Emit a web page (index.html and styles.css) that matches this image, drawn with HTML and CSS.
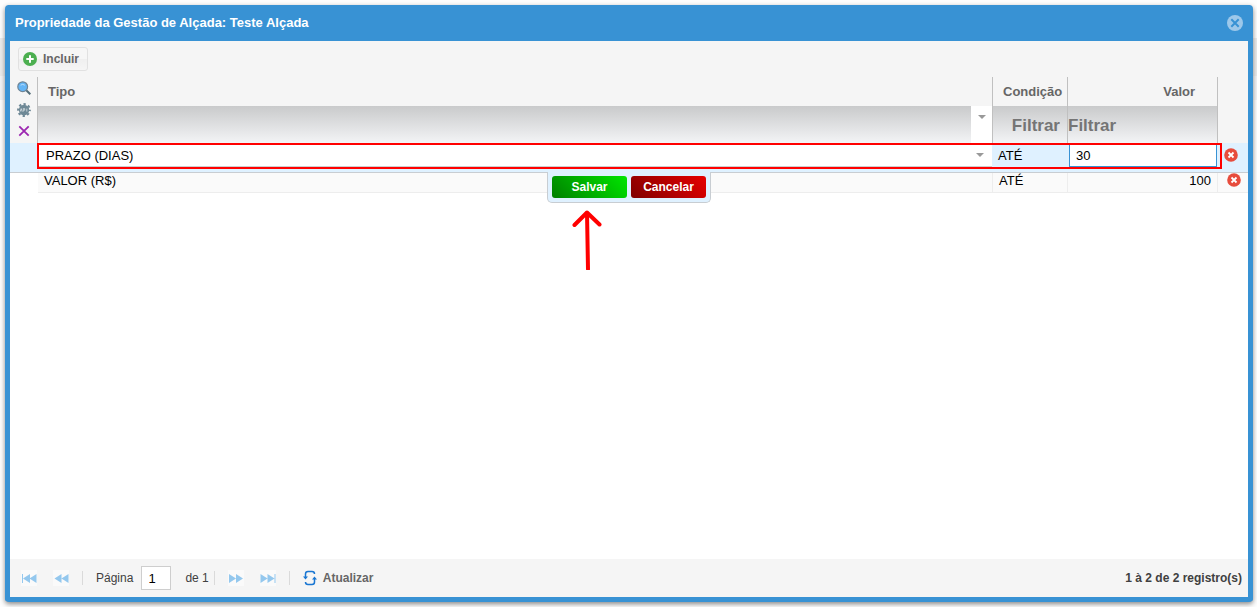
FILE: index.html
```html
<!DOCTYPE html>
<html lang="pt-BR">
<head>
<meta charset="utf-8">
<title>Propriedade da Gestão de Alçada</title>
<link rel="stylesheet" href="styles.css">
</head>
<body>
<section class="window">
  <header class="titlebar">
    <h1 class="title">Propriedade da Gestão de Alçada: Teste Alçada</h1>
    <button class="icon-btn" type="button" aria-label="Fechar">
      <svg width="16" height="16" viewBox="0 0 16 16"><circle cx="8" cy="8" r="8" fill="#9dc8ea"/><path d="M4.3 4.3l7.4 7.4M11.7 4.3l-7.4 7.4" stroke="#3892d4" stroke-width="2"/></svg>
    </button>
  </header>
  <div class="toolbar">
    <button class="add-btn" type="button">
      <svg width="14" height="14" viewBox="0 0 14 14"><circle cx="7" cy="7" r="7" fill="#4caf50"/><path d="M7 3.3v7.4M3.3 7h7.4" stroke="#fff" stroke-width="2"/></svg>
      Incluir
    </button>
  </div>
  <main class="content">
    <table class="grid">
      <colgroup><col class="c-rail"><col><col class="c-cond"><col class="c-valor"><col class="c-del"></colgroup>
      <thead>
        <tr class="head">
          <th class="rail" rowspan="2">
            <div class="rail-tools">
              <button class="icon-btn" type="button" aria-label="Pesquisar">
                <svg width="14" height="14" viewBox="0 0 14 14"><path d="M9 9l4.300 4.300" stroke="#546e7a" stroke-width="2"/><circle cx="5.700" cy="5.700" r="4.900" fill="#64b5f6" stroke="#6f8596" stroke-width="1.200"/><path d="M3.600 4.200q2-1.600 4.200 0" stroke="#bbdefb" fill="none"/></svg>
              </button>
              <button class="icon-btn" type="button" aria-label="Configurar">
                <svg width="14" height="14" viewBox="0 0 14 14"><circle cx="7" cy="7" r="5.900" fill="none" stroke="#6f8996" stroke-width="2" stroke-dasharray="2.320 2.310" stroke-dashoffset="1.160"/><circle cx="7" cy="7" r="5.200" fill="#6f8996"/><path d="M3.200 8.600l1-3 1 3M6.300 8.600v-3h1.400v1.600H6.500M9.800 5.600v3" stroke="#cfd8dc" stroke-width=".9" fill="none"/></svg>
              </button>
              <button class="icon-btn" type="button" aria-label="Limpar">
                <svg width="14" height="14" viewBox="0 0 14 14"><path d="M2.300 1.300l9.400 9.400M11.700 1.300l-9.400 9.400" stroke="#9c27b0" stroke-width="1.800"/></svg>
              </button>
            </div>
          </th>
          <th class="label">Tipo</th>
          <th class="label">Condição</th>
          <th class="label right">Valor</th>
          <th class="blank" rowspan="2"></th>
        </tr>
        <tr class="filters">
          <td><div class="filter-combo"><button class="filter-arrow" type="button" aria-label="Filtrar tipo"><svg width="8" height="4" viewBox="0 0 8 4"><path d="M0 0h8L4 4z" fill="#999"/></svg></button></div></td>
          <td><input class="filter right" type="text" placeholder="Filtrar" aria-label="Filtrar condição"></td>
          <td><input class="filter" type="text" placeholder="Filtrar" aria-label="Filtrar valor"></td>
        </tr>
      </thead>
      <tbody>
        <tr class="editing">
          <td><span class="frame"></span>
            <div class="editor">
              <button class="save" type="button">Salvar</button>
              <button class="cancel" type="button">Cancelar</button>
              <svg class="arrow" width="32" height="60" viewBox="0 0 32 60"><path d="M17 59L16 2.500M16 2.500L3.500 15M16 2.500L28.500 14.500" fill="none" stroke="#f00" stroke-width="4" stroke-linecap="round"/></svg>
            </div>
          </td>
          <td>
            <div class="combo">
              <select class="combo-select" aria-label="Tipo"><option>PRAZO (DIAS)</option><option>VALOR (R$)</option></select>
              <svg width="8" height="4" viewBox="0 0 8 4"><path d="M0 0h8L4 4z" fill="#999"/></svg>
            </div>
          </td>
          <td><span class="cell">ATÉ</span></td>
          <td><input class="value" type="text" value="30" aria-label="Valor"></td>
          <td><button class="icon-btn delete" type="button" aria-label="Excluir"><svg width="14" height="14" viewBox="0 0 14 14"><circle cx="7" cy="7" r="6.800" fill="#e74c3c"/><path d="M4.500 4.500l5 5M9.500 4.500l-5 5" stroke="#fff" stroke-width="1.800"/></svg></button></td>
        </tr>
        <tr class="row">
          <td></td>
          <td><span class="cell">VALOR (R$)</span></td>
          <td><span class="cell">ATÉ</span></td>
          <td class="right"><span class="cell">100</span></td>
          <td class="center"><button class="icon-btn" type="button" aria-label="Excluir"><svg width="14" height="14" viewBox="0 0 14 14"><circle cx="7" cy="7" r="6.800" fill="#e74c3c"/><path d="M4.500 4.500l5 5M9.500 4.500l-5 5" stroke="#fff" stroke-width="1.800"/></svg></button></td>
        </tr>
      </tbody>
    </table>
  </main>
  <footer class="pager">
    <button class="page-btn" type="button" aria-label="Primeira página"><svg width="16" height="16" viewBox="0 0 16 16"><path d="M1 4h1v9H1zM9 4v9L2 8.500zM15.500 4v9l-7-4.500z" fill="#94c8ee"/></svg></button>
    <button class="page-btn" type="button" aria-label="Página anterior"><svg width="16" height="16" viewBox="0 0 16 16"><path d="M8.500 4v9l-7-4.500zM15.500 4v9l-7-4.500z" fill="#94c8ee"/></svg></button>
    <span class="sep"></span>
    <label class="page-label" for="page">Página</label>
    <input class="page-input" id="page" type="text" value="1">
    <span class="page-total">de 1</span>
    <span class="sep tight"></span>
    <button class="page-btn" type="button" aria-label="Próxima página"><svg width="16" height="16" viewBox="0 0 16 16"><path d="M1 4v9l7-4.500zM8 4v9l7-4.500z" fill="#94c8ee"/></svg></button>
    <button class="page-btn" type="button" aria-label="Última página"><svg width="16" height="16" viewBox="0 0 16 16"><path d="M.5 4v9l7-4.500zM7.500 4v9l7-4.500zM14.500 4h1v9h-1z" fill="#94c8ee"/></svg></button>
    <span class="sep"></span>
    <button class="refresh" type="button">
      <svg width="14" height="16" viewBox="0 0 14 16"><path d="M2.500 7.500V4Q2.500 1.500 5 1.500h4Q11.500 1.500 11.500 4M11.500 8.500V12q0 2.500-2.500 2.500H5Q2.500 14.500 2.500 12" fill="none" stroke="#1976d2" stroke-width="1.500"/><path d="M0 6.500h5L2.500 9.500zM9 9.500h5l-2.500-3z" fill="#1976d2"/></svg>
      Atualizar
    </button>
    <strong class="count">1 à 2 de 2 registro(s)</strong>
  </footer>
</section>
</body>
</html>
```
FILE: styles.css
```css
* { box-sizing: border-box; }

body {
  margin: 0;
  height: 100vh;
  padding: 5px 4px 5px 5px;
  display: flex;
  background: linear-gradient(#fdfdfd 38px, #ebebeb 38px, #ebebeb 76px, #f3f4f6 76px, #f3f4f6 100px, #fdfdfd 100px);
  font: 13px/16px "Liberation Sans", Arial, sans-serif;
  color: #000;
}

button, input, select { font: inherit; color: inherit; margin: 0; }
button { padding: 0; border: 0; background: none; cursor: pointer; }
svg { display: block; }

.window {
  flex: 1;
  min-width: 0;
  display: flex;
  flex-direction: column;
  border: 5px solid #3892d4;
  border-top-width: 0;
  border-radius: 4px;
  background: #3892d4;
  box-shadow: 0 2px 5px #888;
}

.titlebar {
  display: flex;
  align-items: center;
  justify-content: space-between;
  height: 36px;
  padding: 0 5px;
  color: #fff;
}
.title { margin: 0; font-size: 13px; line-height: 16px; }

.toolbar {
  height: 36px;
  padding: 6px 8px;
  background: #f5f5f5;
}
.add-btn {
  display: flex;
  align-items: center;
  gap: 6px;
  height: 24px;
  padding: 0 8px 0 4px;
  border: 1px solid #e1e1e1;
  border-radius: 3px;
  background: linear-gradient(#f6f6f6 50%, #efefef 50%, #f5f5f5);
  font-size: 12px;
  font-weight: bold;
  color: #666;
}

.content { flex: 1; background: #fff; }

.grid { width: 100%; table-layout: fixed; border-collapse: separate; border-spacing: 0; }
.grid th, .grid td { padding: 0; }
.c-rail { width: 28px; }
.c-cond { width: 75px; }
.c-valor { width: 150px; }
.c-del { width: 30px; }
.right { text-align: right; }
.center { text-align: center; }

.rail, .label, .blank { background: #f5f5f5; font-weight: bold; color: #666; }
.rail, .label, .filters td { border-right: 1px solid #c0c0c0; }
.rail { vertical-align: top; }
.rail-tools { display: flex; flex-direction: column; align-items: center; gap: 8px; padding-top: 4px; }
.head .label { height: 29px; padding-left: 10px; text-align: left; white-space: nowrap; }
.head .right { padding-right: 22px; text-align: right; }

.filters td { height: 37px; background: linear-gradient(#c9cacb, #f3f4f6); }
.filter-combo { display: flex; justify-content: flex-end; height: 37px; }
.filter-arrow { display: flex; justify-content: center; width: 21px; padding-top: 9px; background: #fff; }
.filter {
  display: block;
  width: 100%;
  height: 37px;
  padding: 2px 0 0;
  border: 0;
  outline: 0;
  background: none;
  font-size: 17px;
  font-weight: bold;
}
.filter.right { padding-right: 7px; }
.filter::placeholder { color: #757575; opacity: 1; }

.editing { position: relative; }
.editing td { height: 30px; vertical-align: top; background: #dff1ff; border-bottom: 1px solid #c8cdd2; }
.editing .cell { display: block; padding: 5px; }
.frame {
  position: absolute;
  z-index: 1;
  top: 0;
  left: 27px;
  right: 26px;
  height: 26px;
  border: 2px solid #f00;
  pointer-events: none;
}
.combo { display: flex; align-items: center; height: 24px; padding-right: 8px; margin-right: 1px; border-bottom: 1px solid #cecece; background: #fff; }
.combo-select { flex: 1; min-width: 0; height: 23px; padding: 2px 0 0 8px; border: 0; background: none; appearance: none; }
.value {
  display: block;
  width: 148px;
  height: 24px;
  margin-left: 1px;
  padding: 0 6px;
  border: 1px solid #3892d4;
  outline: 0;
  background: #fff;
}
.icon-btn { display: inline-block; vertical-align: top; }
.delete { margin: 5px 0 0 6px; }

.editor {
  position: absolute;
  z-index: 2;
  top: 29px;
  left: 50%;
  transform: translateX(-50%);
  display: flex;
  gap: 4px;
  padding: 4px;
  border: 1px solid #c8cdd2;
  border-top: 0;
  border-radius: 0 0 5px 5px;
  background: #dff1ff;
}
.save, .cancel {
  width: 75px;
  height: 22px;
  border-radius: 3px;
  font-size: 12px;
  font-weight: bold;
  color: #fff;
}
.save { background: linear-gradient(45deg, #008000, #00e600); }
.cancel { background: linear-gradient(45deg, #800000, #e60000); }
.arrow { position: absolute; top: 38px; left: 23px; }

.row td { height: 20px; vertical-align: top; }
.row td + td { background: #fafafa; border-right: 1px solid #ededed; border-bottom: 1px solid #ededed; }
.row td:last-child { border-right: 0; }
.row .cell { display: block; padding: 0 6px; }
.row .center { padding-left: 2px; }

.pager {
  display: flex;
  align-items: center;
  height: 38px;
  padding: 0 6px 0 11px;
  background: #f5f5f5;
  font-size: 12px;
  color: #404040;
}
.page-btn { width: 16px; background: #fafafa; }
.page-btn + .page-btn { margin-left: 16px; }
.sep { width: 1px; height: 14px; margin: 0 13px; background: #dadada; }
.sep.tight { margin-left: 5px; }
.page-input {
  width: 30px;
  height: 24px;
  margin: 0 14px 0 8px;
  padding: 0 6px;
  border: 1px solid #cecece;
  background: #fff;
  font-size: 13px;
  color: #000;
}
.refresh { display: flex; align-items: center; gap: 6px; font-weight: bold; color: #666; }
.count { margin-left: auto; }
```
